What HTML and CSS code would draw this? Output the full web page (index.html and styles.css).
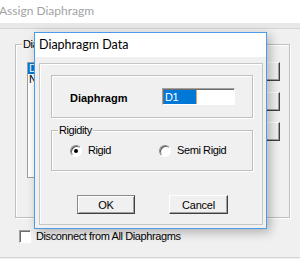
FILE: index.html
```html
<!DOCTYPE html>
<html lang="en">
<head>
  <meta charset="UTF-8" />
  <title>Assign Diaphragm</title>
  <link rel="stylesheet" href="styles.css">
</head>
<body>

<div class="app">
  <div class="app-title">Assign Diaphragm</div>
  <div class="app-band"></div>
  <div class="app-body">
    <div class="group back-group">
      <span class="group-label">Diaphragms</span>
      <ul class="listbox">
        <li class="selected">D1</li>
        <li>NONE</li>
      </ul>
      <div class="back-buttons">
        <button class="button back-button">Add New...</button>
        <button class="button back-button">Modify/Show...</button>
        <button class="button back-button">Delete</button>
      </div>
    </div>
    <label class="check-row"><span class="checkbox"></span>Disconnect from All Diaphragms</label>
  </div>
  <div class="app-bottom"></div>
</div>

<div class="dialog">
  <div class="dialog-title">Diaphragm Data</div>
  <div class="dialog-client">
    <div class="frame">
      <div class="group name-group">
        <span class="name-label">Diaphragm</span>
        <div class="textbox"><span class="selection">D1</span><span class="caret"></span></div>
      </div>
      <div class="group rigidity-group">
        <span class="group-label">Rigidity</span>
        <label class="option option-first"><span class="radio checked"></span>Rigid</label>
        <label class="option"><span class="radio"></span>Semi Rigid</label>
      </div>
      <div class="button-row">
        <button class="button default">OK</button>
        <button class="button cancel">Cancel</button>
      </div>
    </div>
  </div>
</div>

</body>
</html>
```

FILE: styles.css
```css
* { margin: 0; padding: 0; box-sizing: border-box; }

body {
  width: 300px;
  height: 259px;
  overflow: hidden;
  position: relative;
  background: #f0f0f0;
  font-family: 'Liberation Sans', Arial, sans-serif;
  font-size: 11px;
  letter-spacing: -0.4px;
  color: #000;
}

/* back window */
.app {
  height: 259px;
  display: flex;
  flex-direction: column;
}

.app-title {
  height: 23px;
  background: #fff;
  color: #a2a2a2;
  font-family: Lato, sans-serif;
  font-size: 12px;
  letter-spacing: 0;
  line-height: 21px;
  text-indent: -1px;
  white-space: nowrap;
}

.app-band {
  height: 5px;
  background: #e8e8e8;
}

.app-body {
  flex: 1;
  border-top: 1px solid #d4d4d4;
  padding: 15px 0 0 15px;
}

.group {
  position: relative;
  border: 1px solid #bfbfbf;
  box-shadow: inset 1px 1px 0 #fff, 1px 1px 0 #fff;
}

.group-label {
  position: absolute;
  top: -7px;
  left: 6px;
  padding: 0 1px;
  background: #f0f0f0;
  line-height: 13px;
  white-space: nowrap;
}

.back-group {
  width: 275px;
  height: 174px;
  display: flex;
  padding: 17px 9px 0 11px;
}

.listbox {
  list-style: none;
  width: 140px;
  height: 116px;
  background: #fff;
  border: 1px solid #a0a0a0;
  line-height: 11px;
}

.listbox li {
  padding-left: 1px;
}

.listbox .selected {
  background: #0078d7;
  color: #fff;
}

.back-buttons {
  margin-left: auto;
  width: 100px;
  display: flex;
  flex-direction: column;
  gap: 11px;
}

.back-button {
  width: 100px;
  height: 19px;
  white-space: nowrap;
  overflow: hidden;
}

.check-row {
  display: flex;
  align-items: center;
  gap: 5px;
  margin: 12px 0 0 4px;
  line-height: 13px;
}

.checkbox {
  width: 12px;
  height: 13px;
  background: #fff;
  border: 1px solid;
  border-color: #a0a0a0 #fff #fff #a0a0a0;
  box-shadow: inset 1px 1px 0 #6d6d6d;
}

.app-bottom {
  height: 2px;
  border-top: 1px solid #d4d4d4;
}

/* front dialog */
.dialog {
  position: absolute;
  left: 34px;
  top: 32px;
  width: 233px;
  height: 197px;
  border: 1px solid #4a9ce6;
  background: #f0f0f0;
  box-shadow: 3px 3px 10px rgba(0,0,0,0.28);
  display: flex;
  flex-direction: column;
}

.dialog-title {
  height: 24px;
  background: #fff;
  font-family: Lato, sans-serif;
  font-size: 12.5px;
  letter-spacing: 0;
  line-height: 24px;
  padding-left: 4px;
  white-space: nowrap;
}

.dialog-client {
  flex: 1;
  padding: 6px 3px 3px 4px;
}

.frame {
  height: 100%;
  border: 1px solid #c6c6c6;
  box-shadow: inset 1px 1px 0 #fff;
  padding: 11px 0 0 11px;
}

.name-group {
  width: 202px;
  height: 43px;
  display: flex;
  align-items: center;
  padding: 0 17px 0 18px;
}

.name-label {
  font-weight: bold;
  letter-spacing: 0;
  padding-top: 3px;
}

.textbox {
  margin-left: auto;
  width: 73px;
  height: 17px;
  background: #fff;
  border: 1px solid;
  border-color: #a0a0a0 #fff #fff #a0a0a0;
  box-shadow: inset 1px 1px 0 #6d6d6d;
  display: flex;
  padding: 1px 0 0 1px;
}

.selection {
  width: 32px;
  background: #0078d7;
  color: #fff;
  line-height: 14px;
  padding-left: 1px;
}

.caret {
  width: 1px;
  background: #f0a060;
}

.rigidity-group {
  width: 202px;
  height: 41px;
  margin-top: 12px;
  display: flex;
  align-items: center;
  padding-left: 18px;
}

.option {
  display: flex;
  align-items: center;
  gap: 6px;
  line-height: 13px;
}

.option-first {
  width: 89px;
}

.radio {
  position: relative;
  width: 12px;
  height: 12px;
  border-radius: 50%;
  background: #fff;
  border: 1px solid;
  border-color: #8a8a8a #fff #fff #8a8a8a;
  box-shadow: inset 1px 1px 0 #5a5a5a;
}

.radio.checked::after {
  content: "";
  position: absolute;
  left: 3px;
  top: 3px;
  width: 4px;
  height: 4px;
  border-radius: 50%;
  background: #000;
}

.button-row {
  display: flex;
  margin: 24px 0 0 26px;
}

.button {
  height: 19px;
  font-family: 'Liberation Sans', Arial, sans-serif;
  font-size: 11px;
  letter-spacing: -0.2px;
  color: #000;
  background: #f0f0f0;
  border: 1px solid;
  border-color: #fff #404040 #404040 #fff;
  box-shadow: inset -1px -1px 0 #a0a0a0;
}

.button.default {
  width: 58px;
  border-color: #8a8a8a #404040 #404040 #8a8a8a;
  box-shadow: inset 1px 1px 0 #fff, inset -1px -1px 0 #a0a0a0;
}

.button.cancel {
  width: 59px;
  margin-left: 34px;
}
```
